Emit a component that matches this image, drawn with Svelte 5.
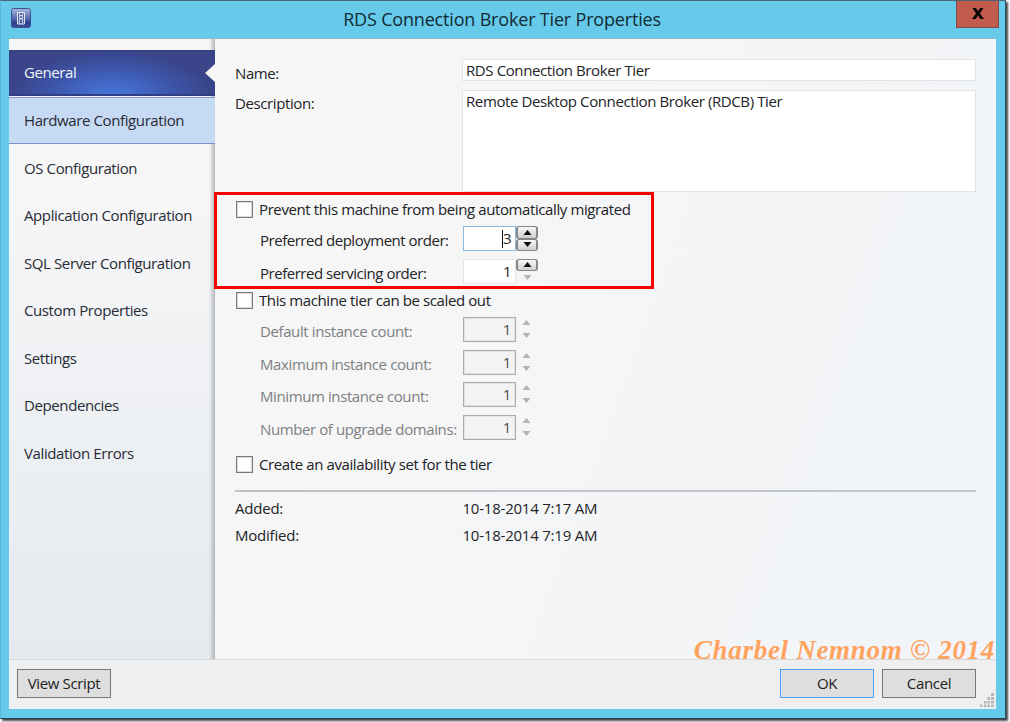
<script>
  const nav = ['General', 'Hardware Configuration', 'OS Configuration', 'Application Configuration', 'SQL Server Configuration', 'Custom Properties', 'Settings', 'Dependencies', 'Validation Errors'];
  const orders = [
    { label: 'Preferred deployment order:', value: '3', focus: true },
    { label: 'Preferred servicing order:', value: '1', focus: false }
  ];
  const counts = ['Default instance count:', 'Maximum instance count:', 'Minimum instance count:', 'Number of upgrade domains:'];
</script>

{#snippet arrow(down, muted)}
  <svg class="tri" width="9" height="5" viewBox="0 0 9 5"><path d={down ? 'M.5 0h8l-4 5z' : 'M.5 5h8l-4-5z'} fill={muted ? '#b1b4b7' : '#0c0c0c'} /></svg>
{/snippet}

<div class="screen">
  <div class="window">
    <header>
      <svg class="app" width="20" height="20" viewBox="0 0 20 20">
        <defs><linearGradient id="g" x1="0" y1="0" x2="0" y2="1"><stop offset="0" stop-color="#a8b8dc" /><stop offset=".5" stop-color="#5a70b0" /><stop offset=".75" stop-color="#303f8d" /><stop offset="1" stop-color="#3c4c9c" /></linearGradient></defs>
        <rect x=".5" y=".5" width="19" height="19" rx="2" fill="url(#g)" stroke="#3c5194" />
        <path d="M6.600 4.500h6.800v11.500H6.600z" fill="#4a5c9c" stroke="#f0f3fb" stroke-width="1" />
        <path d="M8 7h4v1.200H8zM8 10h4v1.200H8z" fill="#f4f7fd" /><path d="M8 4.500h1v11H8zM11 4.500h1v11h-1z" fill="#b9c4e2" />
      </svg>
      <h1>RDS Connection Broker Tier Properties</h1>
      <button class="close" aria-label="Close"><svg width="12" height="11" viewBox="0 0 12 11"><path d="M.5 0h3.500l2 3.200L8 0h3.500L8 5.400 12 11H8.200L6 7.600 3.800 11H0l4-5.600z" fill="#080505" /></svg></button>
    </header>
    <main>
      <nav>
        {#each nav as item, i}
          <div class="item" class:active={i === 0} class:hover={i === 1}><span>{item}</span></div>
        {/each}
      </nav>
      <section>
        <div class="row name"><label for="n">Name:</label><div class="box" id="n">RDS Connection Broker Tier</div></div>
        <div class="row desc"><label for="d">Description:</label><div class="box" id="d">Remote Desktop Connection Broker (RDCB) Tier</div></div>
        <div class="callout">
          <div class="check first"><i></i><span>Prevent this machine from being automatically migrated</span></div>
          {#each orders as o}
            <div class="num"><span>{o.label}</span>
              <div class="value" class:focus={o.focus}>{#if o.focus}<b></b>{/if}{o.value}</div>
              <div class="spin"><div class="btn">{@render arrow(false, false)}</div>
                <div class={o.focus ? 'btn' : 'bare'}>{@render arrow(true, !o.focus)}</div></div>
            </div>
          {/each}
        </div>
        <div class="check second"><i></i><span>This machine tier can be scaled out</span></div>
        {#each counts as c}
          <div class="num off"><span>{c}</span><div class="value">1</div>
            <div class="spin muted">{@render arrow(false, true)}{@render arrow(true, true)}</div></div>
        {/each}
        <div class="check third"><i></i><span>Create an availability set for the tier</span></div>
        <hr />
        <div class="meta"><span>Added:</span><span>10-18-2014 7:17 AM</span></div>
        <div class="meta"><span>Modified:</span><span>10-18-2014 7:19 AM</span></div>
        <div class="mark">Charbel Nemnom © 2014</div>
      </section>
    </main>
    <footer>
      <button>View Script</button><div class="grow"></div>
      <button class="ok">OK</button><button>Cancel</button>
      <svg class="grip" width="14" height="14" viewBox="0 0 14 14"><path d="M11 0h3v3h-3zM7.500 4h2.500v3H7.500zM11 4h3v3h-3zM4 8h2.500v2.500H4zM7.500 8h2.500v2.500H7.500zM11 8h3v2.500h-3zM0 11.500h2.500v2.500H0zM4 11.500h2.500v2.500H4zM7.500 11.500h2.500v2.500H7.500zM11 11.500h3v2.500h-3z" fill="#b7b7b7" /></svg>
    </footer>
  </div>
</div>

<style>
  :global(body) { margin: 0; background: #fff; overflow: hidden; }
  * { box-sizing: border-box; }
  .screen { width: 1010px; height: 722px; font: 15px 'Open Sans', 'Noto Sans', sans-serif; letter-spacing: -.395px; color: #222427; background: #fff; }
  .window { width: 1006px; height: 719px; background: #66caea; border-top: 1px solid #4a6670; border-right: 1px solid #2c5361; border-bottom: 1px solid #30434b; border-left: 1px solid #58bbdc; padding: 0 9px 9px 8px; box-shadow: 2px 2px 2px #444; display: flex; flex-direction: column; }
  header { height: 37px; display: flex; align-items: flex-start; flex: none; }
  .app { margin: 7px 0 0 2px; }
  h1 { font-size: 18px; font-weight: 400; line-height: 24px; margin: 6px 0 0; flex: 1; text-align: center; padding-left: 17px; color: #142b34; letter-spacing: -.18px; }
  .close { width: 43px; height: 27px; margin-right: -3px; background: #c15b4e; border: 1px solid #7c4c4c; border-top: 0; padding: 0; display: grid; place-items: center; }
  .close svg { margin-top: -2px; }
  main { height: 621px; display: flex; border-top: 1px solid #8eb8c9; flex: none; }
  nav { width: 206px; flex: none; padding-top: 10.500px; background: linear-gradient(90deg, transparent 200px, #a4a9adcc 206px), linear-gradient(#f6f6f7 25%, #e5eaef); }
  .item { height: 47.500px; display: flex; align-items: center; padding-left: 15px; color: #272b35; padding-bottom: 1.500px; }
  .active { color: #f3f5fb; background: radial-gradient(ellipse 100px 43px at 50% 100%, #4777dc, #3d56ab 60%, transparent), #394489; border-top: 1px solid #32407f; border-bottom: 2px solid #303e84; height: 46.500px; margin-bottom: 1px; padding-bottom: 0; position: relative; }
  .active::after { content: ''; position: absolute; right: 0; top: 13px; border: 9px solid transparent; border-right: 10px solid #f6f6f6; border-left: 0; }
  .hover { background: #c7daf4; border-top: 1px solid #8495ca; border-bottom: 1px solid #8093c9; height: 46.500px; margin-bottom: 1px; padding-bottom: 1px; }
  section { flex: 1; background: linear-gradient(110deg, #f6f6f6 20%, #f3f5f7 70%, #f1f5f9); padding: 20px 20px 0 0; position: relative; }
  .row { display: flex; padding-left: 20px; line-height: 20px; }
  .row label { width: 227px; padding-top: 3.500px; }
  .box { flex: 1; background: #fff; border: 1px solid #e2e3e7; padding-left: 3px; }
  .name { height: 30.500px; } .name .box { height: 22px; line-height: 20px; }
  .desc { height: 102px; margin-bottom: 1px; } .desc .box { line-height: 21px; }
  .callout { border: 3px solid #f80000; width: 440px; height: 97px; margin: -.5px 0 0 -1px; }
  .check { display: flex; align-items: center; height: 30px; gap: 6px; padding-left: 21px; color: #202225; }
  .check i { width: 17px; height: 17px; border: 1.500px solid #77797b; outline: 1px solid #77797b44; outline-offset: -2px; background: #fff; }
  .check span { position: relative; top: -.5px; }
  .first { padding-left: 19px; height: 28px; margin-bottom: 3px; }
  .num { display: flex; height: 32.500px; padding-left: 45px; }
  .callout .num { padding-left: 43px; letter-spacing: -.48px; }
  .num > span { width: 203px; padding-top: 3px; line-height: 22px; white-space: nowrap; }
  .value { width: 53px; height: 25px; text-align: right; border: 1px solid #e4e5e6; padding-right: 4px; line-height: 23px; background: #fff; }
  .focus { border-color: #8cb9df; }
  .value b { display: inline-block; width: 1px; height: 18px; background: #111; vertical-align: -4px; }
  .spin { width: 22px; height: 25px; display: flex; flex-direction: column; }
  .btn, .bare { height: 12.500px; display: grid; place-items: center; }
  .btn { border: 1px solid #84878a; border-width: 1px 2px; border-radius: 3px; background: linear-gradient(#f8f8f8, #cfcfcf); }
  .off { color: #7d8083; }
  .off .value { background: #f3f3f3; border: 1px solid #a9abad; outline: 1px solid #e2e3e4; outline-offset: -2px; color: #4d5050; }
  .muted { width: 21px; align-items: center; justify-content: space-between; padding: 3px 0 4px; }
  .second { height: 28px; padding-bottom: 5px; }
  .third { height: 34px; }
  hr { height: 2px; border: 0; background: #c0c4c8; margin: 8.500px 0 0 20px; }
  .meta { display: flex; padding: 3px 0 0 20px; height: 27.500px; line-height: 27px; }
  .meta span { letter-spacing: -.22px; }
  .meta span:first-child { width: 227.500px; }
  .mark { position: absolute; right: 1px; bottom: -6px; color: #ffa35f; font: italic bold 27px/30px 'Liberation Serif', serif; letter-spacing: .7px; white-space: nowrap; }
  footer { height: 51px; background: #efefef; border-top: 1px solid #d5d9dc; display: flex; align-items: center; padding: 0 20px 2px 8px; position: relative; }
  footer button { font: inherit; letter-spacing: -.35px; color: #222; width: 94px; height: 29px; border: 1px solid #777; background: #dedede; padding: 0 0 1px; }
  footer .ok { margin-right: 8px; border-color: #4da0f8; }
  .grow { flex: 1; }
  .grip { position: absolute; right: 2px; bottom: 2px; }
</style>
